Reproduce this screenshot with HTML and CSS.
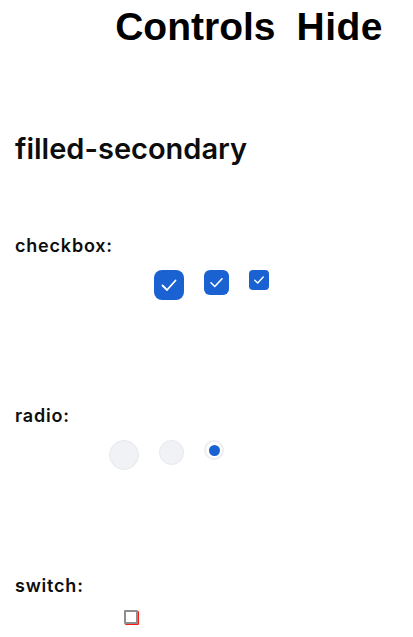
FILE: index.html
```html
<!DOCTYPE html>
<html lang="en">
<head>
<meta charset="utf-8">
<title>Controls</title>
<link rel="stylesheet" href="styles.css">
</head>
<body>
<header class="topbar">
  <span class="topbar-title">Controls</span>
  <span class="topbar-action">Hide</span>
</header>
<main class="content">
  <h2 class="variant-title">filled-secondary</h2>

  <section class="group">
    <div class="group-label">checkbox:</div>
    <div class="row row-checkbox">
      <span class="cb cb-lg">
        <svg viewBox="0 0 30 30"><path d="M8.5 15.5 L13 20 L21.5 10.5"/></svg>
      </span>
      <span class="cb cb-md">
        <svg viewBox="0 0 25 25"><path d="M7 12.8 L10.8 16.5 L18 8.8"/></svg>
      </span>
      <span class="cb cb-sm">
        <svg viewBox="0 0 20 20"><path d="M5.8 10.2 L8.7 13 L14.2 7"/></svg>
      </span>
    </div>
  </section>

  <section class="group">
    <div class="group-label">radio:</div>
    <div class="row row-radio">
      <span class="radio radio-lg"></span>
      <span class="radio radio-md"></span>
      <span class="radio radio-sm radio-on"></span>
    </div>
  </section>

  <section class="group">
    <div class="group-label">switch:</div>
    <div class="row row-switch">
      <span class="switch-box"></span>
    </div>
  </section>
</main>
</body>
</html>
```

FILE: styles.css
```css
html, body {
  margin: 0;
  padding: 0;
  background: #ffffff;
  color: #0d0d0d;
}

body {
  font-family: Inter, "Noto Sans", sans-serif;
}

.topbar {
  display: flex;
  justify-content: flex-end;
  align-items: baseline;
  gap: 21px;
  padding: 4px 30px 0 0;
  height: 45px;
  font-family: "Liberation Sans", Arial, sans-serif;
  font-weight: bold;
  font-size: 39px;
  line-height: 45px;
  color: #000;
}

.topbar-action {
  letter-spacing: 0.5px;
}

.content {
  padding: 0 15px;
}

.variant-title {
  margin: 83px 0 0 0;
  font-size: 29px;
  line-height: 34px;
  font-weight: 600;
}

.group {
  margin-top: 69px;
}

.group + .group {
  margin-top: 105px;
}

.group-label {
  font-size: 18px;
  line-height: 22px;
  font-weight: 600;
  letter-spacing: 0.8px;
}

.row {
  display: flex;
  align-items: flex-start;
  gap: 20px;
  margin-top: 13px;
  height: 30px;
}

.row-checkbox { padding-left: 139px; }
.row-radio { padding-left: 94px; }
.row-switch { padding-left: 109px; }

.cb {
  display: flex;
  align-items: center;
  justify-content: center;
  background: #1a62d2;
  flex: none;
}

.cb svg {
  width: 100%;
  height: 100%;
  fill: none;
  stroke: #ffffff;
  stroke-width: 1.6;
  stroke-linecap: round;
  stroke-linejoin: round;
}

.cb-lg { width: 30px; height: 30px; border-radius: 8px; }
.cb-md { width: 25px; height: 25px; border-radius: 6px; }
.cb-sm { width: 20px; height: 20px; border-radius: 4px; }
.cb-lg svg { stroke-width: 1.8; }
.cb-sm svg { stroke-width: 1.4; }

.radio {
  box-sizing: border-box;
  border-radius: 50%;
  background: #f1f2f5;
  border: 1px solid #e6e8ec;
  flex: none;
  display: flex;
  align-items: center;
  justify-content: center;
}

.radio-lg { width: 30px; height: 30px; }
.radio-md { width: 25px; height: 25px; }
.radio-sm { width: 20px; height: 20px; }

.radio-on {
  background: #ffffff;
  border: 2px solid #eceef2;
}

.radio-on::after {
  content: "";
  width: 11px;
  height: 11px;
  border-radius: 50%;
  background: #1a62d2;
}

.switch-box {
  box-sizing: border-box;
  width: 14px;
  height: 14px;
  border: 2px solid #8d8d8d;
  border-radius: 1px;
  background: #fff;
  box-shadow: 1px 1px 0 0 #ff1a1a;
}
```
